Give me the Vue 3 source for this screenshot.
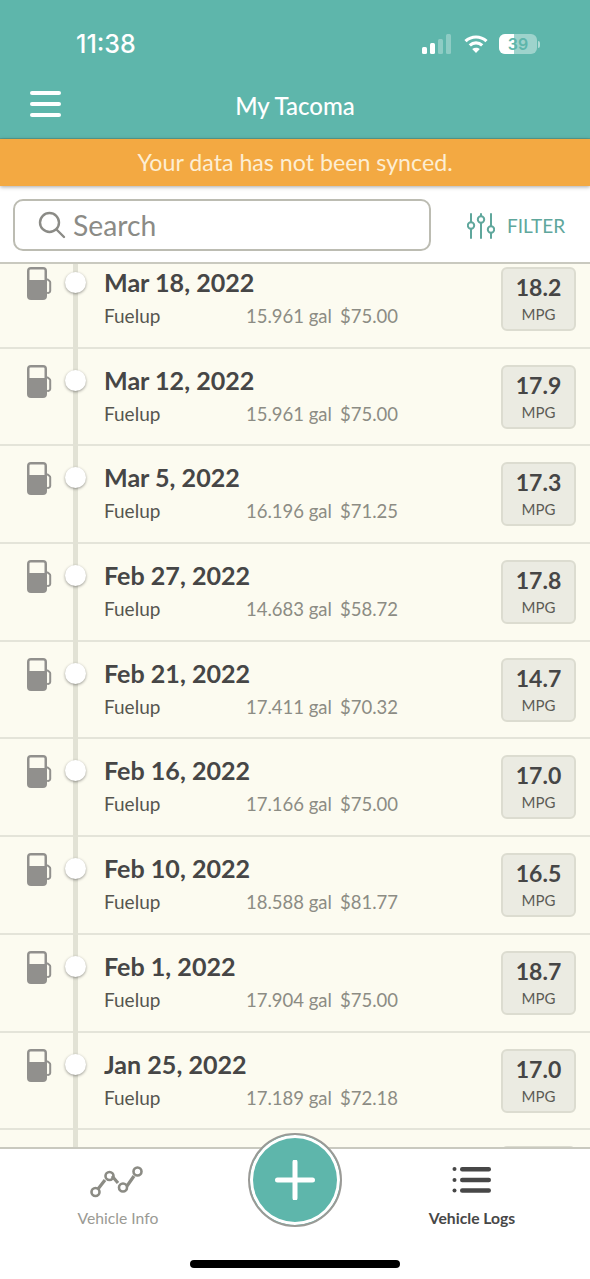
<script setup>
const logs = [
  { date: 'Mar 18, 2022', gal: '15.961 gal', cost: '$75.00', mpg: '18.2' },
  { date: 'Mar 12, 2022', gal: '15.961 gal', cost: '$75.00', mpg: '17.9' },
  { date: 'Mar 5, 2022', gal: '16.196 gal', cost: '$71.25', mpg: '17.3' },
  { date: 'Feb 27, 2022', gal: '14.683 gal', cost: '$58.72', mpg: '17.8' },
  { date: 'Feb 21, 2022', gal: '17.411 gal', cost: '$70.32', mpg: '14.7' },
  { date: 'Feb 16, 2022', gal: '17.166 gal', cost: '$75.00', mpg: '17.0' },
  { date: 'Feb 10, 2022', gal: '18.588 gal', cost: '$81.77', mpg: '16.5' },
  { date: 'Feb 1, 2022', gal: '17.904 gal', cost: '$75.00', mpg: '18.7' },
  { date: 'Jan 25, 2022', gal: '17.189 gal', cost: '$72.18', mpg: '17.0' }
]
</script>

<template>
  <div class="app">
    <header class="top">
      <div class="status">
        <span class="time">11:38</span>
        <div class="status-icons">
          <svg class="signal" width="30" height="20" viewBox="0 0 30 20">
            <rect x="0" y="13" width="5" height="7" rx="1.5" fill="#fff" />
            <rect x="8" y="9" width="5" height="11" rx="1.5" fill="#fff" />
            <rect x="16" y="5" width="5" height="15" rx="1.5" fill="#fff" opacity=".3" />
            <rect x="24" y="0" width="5" height="20" rx="1.5" fill="#fff" opacity=".3" />
          </svg>
          <svg class="wifi" width="24" height="18" viewBox="0 0 24 18" fill="none" stroke="#fff" stroke-width="3.2">
            <path d="M1.5 6.2C7.5 .6 16.500 .6 22.500 6.2" />
            <path d="M5.800 10.400C9.400 7 14.600 7 18.200 10.400" />
            <path d="M12 18L8.200 14C10.400 12.200 13.600 12.200 15.800 14Z" fill="#fff" stroke="none" />
          </svg>
          <div class="battery">
            <div class="batt-body"><div class="batt-fill"></div><span class="batt-text">39</span></div>
            <div class="batt-cap"></div>
          </div>
        </div>
      </div>
      <div class="nav">
        <div class="burger"><i></i><i></i><i></i></div>
        <span class="title">My Tacoma</span>
      </div>
    </header>

    <div class="banner">Your data has not been synced.</div>

    <div class="search-row">
      <div class="search">
        <svg width="28" height="28" viewBox="0 0 28 28" fill="none" stroke="#8b8b86" stroke-width="2.400" stroke-linecap="round">
          <circle cx="11.500" cy="11.500" r="9.500" />
          <path d="M18.500 18.500L26 26" />
        </svg>
        <span>Search</span>
      </div>
      <div class="filter">
        <svg width="28" height="26" viewBox="0 0 28 26" fill="none" stroke="#5fa79c" stroke-width="2" stroke-linecap="round">
          <path d="M4 1v8M4 16v9M14 1v2M14 10v15M24 1v12M24 20v5" />
          <circle cx="4" cy="12.500" r="3.200" />
          <circle cx="14" cy="6.500" r="3.200" />
          <circle cx="24" cy="16.500" r="3.200" />
        </svg>
        <span>FILTER</span>
      </div>
    </div>

    <main class="list">
      <div class="list-inner">
        <div v-for="log in logs" :key="log.date" class="row">
          <svg class="pump" width="25" height="33" viewBox="0 0 25 33">
            <path fill="#91908d" fill-rule="evenodd" d="M4 0h12a4 4 0 0 1 4 4v25a4 4 0 0 1-4 4H4a4 4 0 0 1-4-4V4a4 4 0 0 1 4-4zM3.500 2.500a1 1 0 0 0-1 1V13h15V3.500a1 1 0 0 0-1-1z" />
            <path fill="none" stroke="#91908d" stroke-width="2" d="M20 12l2.500 2a1.500 1.500 0 0 1 .7 1.200v8.800a2 2 0 0 1-3.200 1.500" />
          </svg>
          <div class="node"><div class="dot"></div></div>
          <div class="info">
            <div class="date">{{ log.date }}</div>
            <div class="detail">
              <span class="kind">Fuelup</span>
              <span class="gal">{{ log.gal }}</span>
              <span class="cost">{{ log.cost }}</span>
            </div>
          </div>
          <div class="mpg">
            <div class="mpg-val">{{ log.mpg }}</div>
            <div class="mpg-unit">MPG</div>
          </div>
        </div>
        <div class="row partial">
          <div class="spacer"></div>
          <div class="node"></div>
          <div class="info"></div>
          <div class="mpg"></div>
        </div>
      </div>
    </main>

    <nav class="tabs">
      <div class="tab">
        <svg width="56" height="34" viewBox="0 0 56 34" fill="none" stroke="#8b8b84" stroke-width="2.600">
          <path d="M8 24L15 15M22 11L28 18M37 21L44 11" stroke-width="3.200" />
          <circle cx="5.500" cy="27" r="4" />
          <circle cx="19.500" cy="11" r="4" />
          <circle cx="33" cy="22.500" r="4" />
          <circle cx="47.500" cy="6.500" r="4" />
        </svg>
        <span class="tab-label">Vehicle Info</span>
      </div>
      <div class="tab active">
        <svg width="40" height="34" viewBox="0 0 40 34" fill="#474747">
          <circle cx="2.500" cy="6" r="2" />
          <circle cx="2.500" cy="17" r="2" />
          <circle cx="2.500" cy="27.500" r="2" />
          <rect x="8" y="4" width="31" height="4.400" rx="2.200" />
          <rect x="8" y="14.800" width="31" height="4.400" rx="2.200" />
          <rect x="8" y="25.300" width="31" height="4.400" rx="2.200" />
        </svg>
        <span class="tab-label">Vehicle Logs</span>
      </div>
      <div class="home"></div>
    </nav>

    <div class="fab">
      <svg width="40" height="40" viewBox="0 0 40 40" stroke="#fff" stroke-width="5" stroke-linecap="round">
        <path d="M20 2v36M2.500 20h35" />
      </svg>
    </div>
  </div>
</template>

<style scoped>
.app {
  position: relative;
  width: 590px;
  height: 1279px;
  display: flex;
  flex-direction: column;
  overflow: hidden;
  background: #fff;
  font-family: Lato, "Open Sans", sans-serif;
}
.top {
  height: 139px;
  flex: none;
  background: #5eb6ab;
  border-bottom: 1px solid #58a093;
  box-sizing: border-box;
  color: #fff;
}
.status {
  height: 80px;
  display: flex;
  align-items: center;
  justify-content: space-between;
  padding: 8px 50px 0 76px;
  box-sizing: border-box;
}
.time {
  font-family: Inter, sans-serif;
  font-size: 25px;
  font-weight: 500;
}
.status-icons {
  display: flex;
  align-items: center;
}
.signal {
  margin-right: 12px;
}
.wifi {
  margin-right: 11px;
}
.battery {
  display: flex;
  align-items: center;
  gap: 1px;
}
.batt-body {
  position: relative;
  width: 38px;
  height: 20px;
  border-radius: 6px;
  background: rgba(255, 255, 255, .4);
  overflow: hidden;
}
.batt-fill {
  width: 15px;
  height: 100%;
  background: #fff;
}
.batt-text {
  position: absolute;
  inset: 0;
  text-align: center;
  font-family: Inter, sans-serif;
  font-size: 16px;
  font-weight: 600;
  line-height: 20px;
  color: #5eb6ab;
}
.batt-cap {
  width: 2px;
  height: 7px;
  border-radius: 0 2px 2px 0;
  background: rgba(255, 255, 255, .5);
}
.nav {
  position: relative;
  display: flex;
  justify-content: center;
  align-items: center;
  height: 50px;
}
.burger {
  position: absolute;
  left: 30px;
  top: 11px;
  display: flex;
  flex-direction: column;
  gap: 7px;
}
.burger i {
  display: block;
  width: 31px;
  height: 4px;
  border-radius: 2px;
  background: #fff;
}
.title {
  font-size: 24px;
  font-weight: 500;
}
.banner {
  position: relative;
  z-index: 1;
  height: 47px;
  flex: none;
  background: #f3a942;
  color: #fdeed3;
  font-size: 23.200px;
  line-height: 47px;
  text-align: center;
  box-shadow: 0 1px 4px rgba(0, 0, 0, .35);
}
.search-row {
  height: 78px;
  flex: none;
  display: flex;
  align-items: flex-start;
  padding: 13px 0 0 13px;
  box-sizing: border-box;
  border-bottom: 2px solid #c9c9bf;
}
.search {
  width: 418px;
  height: 52px;
  box-sizing: border-box;
  border: 2px solid #bcbcb2;
  border-radius: 10px;
  display: flex;
  align-items: center;
  gap: 7px;
  padding-left: 23px;
  font-size: 28.300px;
  color: #8b8b86;
}
.filter {
  display: flex;
  align-items: center;
  gap: 12px;
  margin-left: 36px;
  height: 53px;
  color: #5fa79c;
  font-size: 19px;
}
.list {
  flex: 1;
  min-height: 0;
  overflow: hidden;
  background: #fcfbf0;
}
.list-inner {
  margin-top: -13px;
}
.row {
  height: 97.700px;
  box-sizing: border-box;
  display: flex;
  border-bottom: 2px solid #e4e4d9;
  padding: 16px 14px 0 27px;
}
.pump {
  flex: none;
}
.spacer {
  flex: none;
  width: 25px;
}
.node {
  position: relative;
  flex: none;
  width: 52px;
  align-self: stretch;
}
.node::before {
  content: "";
  position: absolute;
  left: 21px;
  top: -18px;
  bottom: -2px;
  width: 5px;
  background: #e2e2d5;
}
.dot {
  position: absolute;
  left: 13px;
  top: 5px;
  width: 21px;
  height: 21px;
  border-radius: 50%;
  background: #fff;
  box-shadow: 0 1px 3px rgba(0, 0, 0, .4);
}
.info {
  flex: 1;
  color: #464646;
  margin-top: -1px;
}
.date {
  font-size: 25.100px;
  font-weight: 700;
  line-height: 32px;
}
.detail {
  display: flex;
  align-items: baseline;
  margin-top: 6px;
  font-size: 18.500px;
  line-height: 24px;
}
.kind {
  width: 142px;
  font-size: 19px;
  color: #55554f;
}
.gal {
  width: 94px;
  color: #8c8c84;
}
.cost {
  color: #8c8c84;
}
.mpg {
  flex: none;
  width: 75px;
  height: 64px;
  box-sizing: border-box;
  border: 2px solid #dcdcd0;
  border-radius: 6px;
  background: #ebebe2;
  text-align: center;
  color: #464646;
}
.mpg-val {
  font-size: 23px;
  font-weight: 700;
  line-height: 26px;
  margin-top: 5px;
}
.mpg-unit {
  font-size: 15px;
  line-height: 18px;
  margin-top: 5px;
  color: #5b5b55;
}
.tabs {
  position: relative;
  height: 132px;
  flex: none;
  box-sizing: border-box;
  border-top: 2px solid #c9c9bf;
  background: #fff;
  display: flex;
  justify-content: space-between;
  padding: 0 33px 0 0;
}
.tab {
  width: 236px;
  display: flex;
  flex-direction: column;
  align-items: center;
  padding-top: 16px;
  gap: 8px;
  color: #9a9a94;
}
.tab.active {
  width: 170px;
  color: #474747;
  font-weight: 700;
}
.tab.active svg {
  margin: -2px 0 2px;
}
.tab-label {
  font-size: 15.700px;
  line-height: 22px;
}
.home {
  position: absolute;
  left: 190px;
  top: 111px;
  width: 210px;
  height: 8px;
  border-radius: 4px;
  background: #000;
}
.fab {
  position: absolute;
  left: 248px;
  top: 1133px;
  width: 94px;
  height: 94px;
  box-sizing: border-box;
  border-radius: 50%;
  border: 2px solid #9a9a96;
  background: #5eb6ab;
  box-shadow: inset 0 0 0 3px #fff;
  display: flex;
  align-items: center;
  justify-content: center;
}
</style>
